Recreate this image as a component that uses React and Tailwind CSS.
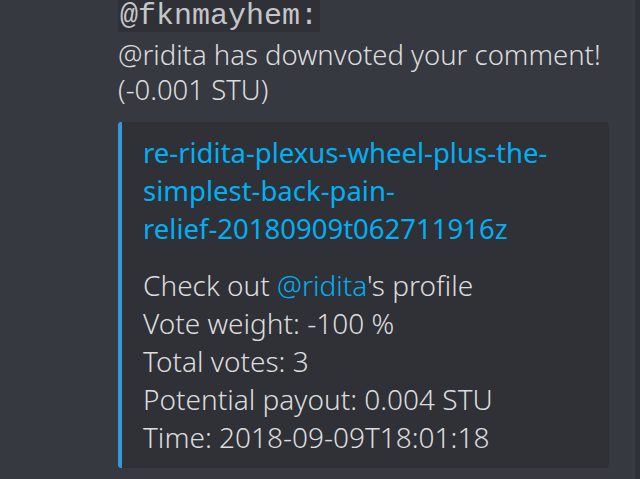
import React from "react";

const fields = [
  { label: "Vote weight: -100 %" },
  { label: "Total votes: 3" },
  { label: "Potential payout: 0.004 STU" },
  { label: "Time: 2018-09-09T18:01:18" },
];

const titleLines = [
  "re-ridita-plexus-wheel-plus-the-",
  "simplest-back-pain-",
  "relief-20180909t062711916z",
];

const App = () => {
  return (
    <div className="w-full h-[479px] overflow-hidden flex bg-[#36393f] font-['Noto_Sans',sans-serif]">
      {/* Message column */}
      <div className="flex-1 pl-[118px] flex flex-col">
        <div>
          <span className="inline-block bg-[#2f3136] px-[2px] h-[32px] leading-[32px] text-[30px] text-[#c4c6c9] font-['Liberation_Mono',monospace]">
            @fknmayhem:
          </span>
        </div>

        <div className="mt-[5px] text-[27.5px] leading-[35px] text-[#dcddde] font-light">
          <div>@ridita has downvoted your comment!</div>
          <div>(-0.001 STU)</div>
        </div>

        {/* Embed */}
        <div className="mt-[15px] w-[491px] flex rounded-r-[4px] bg-[#2f3136]">
          <div className="w-[4px] shrink-0 bg-[#3498db] rounded-l-[3px]" />
          <div className="pl-[21px] pr-4 pt-[12px] pb-[12px] flex flex-col">
            <div className="text-[27.5px] leading-[38px] text-[#00b0f4]">
              {titleLines.map((line, i) => (
                <div key={i} className="whitespace-nowrap">{line}</div>
              ))}
            </div>
            <div className="mt-[18px] text-[28px] leading-[38px] text-[#dcddde] font-light">
              <div className="whitespace-nowrap">
                Check out <span className="text-[#00b0f4]">@ridita</span>'s profile
              </div>
              {fields.map((f, i) => (
                <div key={i} className="whitespace-nowrap">{f.label}</div>
              ))}
            </div>
          </div>
        </div>
      </div>

      {/* Scrollbar strip */}
      <div className="w-[5px] shrink-0 bg-[#2e3136]" />
    </div>
  );
};

export default App;
